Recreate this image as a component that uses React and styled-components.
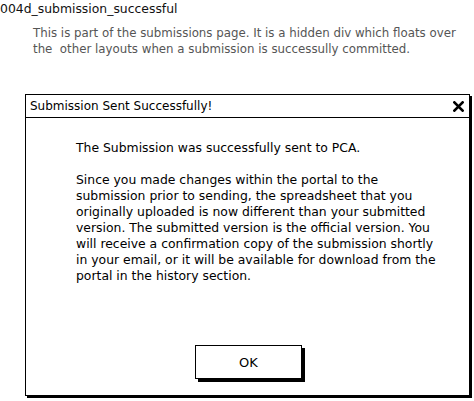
import React from "react";
import styled, { createGlobalStyle } from "styled-components";

const GlobalStyle = createGlobalStyle`
  body {
    margin: 0;
    background: #ffffff;
    font-family: "DejaVu Sans", "Liberation Sans", sans-serif;
  }
`;

const Page = styled.div`
  width: 474px;
  height: 401px;
  overflow: hidden;
  display: flex;
  flex-direction: column;
`;

const PageTitle = styled.div`
  font-size: 12.4px;
  line-height: 16px;
  color: #111;
  padding-top: 1px;
`;

const Note = styled.p`
  margin: 8px 0 0 33px;
  font-size: 11.8px;
  line-height: 16px;
  color: #555;
  white-space: pre;
`;

const Dialog = styled.div`
  margin: 37px 0 0 25px;
  width: 443px;
  height: 300px;
  border: 1.5px solid #000;
  box-shadow: 2px 2px 0 #000;
  display: flex;
  flex-direction: column;
  background: #fff;
`;

const TitleBar = styled.div`
  height: 22px;
  border-bottom: 1.5px solid #000;
  display: flex;
  align-items: center;
  justify-content: space-between;
  padding: 0 5px 0 4px;
  font-size: 12px;
  color: #000;
`;

const Close = styled.svg`
  width: 11px;
  height: 11px;
`;

const Body = styled.div`
  flex: 1;
  display: flex;
  flex-direction: column;
  align-items: center;
  padding-top: 22px;
`;

const Message = styled.div`
  width: 345px;
  margin-left: 2px;
  font-size: 12.4px;
  line-height: 16px;
  color: #000;
  white-space: pre;
`;

const Para = styled.p`
  margin: 0 0 ${(p) => p.gap || 0}px;
`;

const OkButton = styled.button`
  margin-top: auto;
  margin-bottom: 16px;
  width: 107px;
  height: 34px;
  border: 1.5px solid #000;
  box-shadow: 3px 3px 0 #000;
  background: #fff;
  font-family: inherit;
  font-size: 13px;
  color: #000;
  margin-left: 2px;
`;

export default function App() {
  return (
    <>
      <GlobalStyle />
      <Page>
        <PageTitle>004d_submission_successful</PageTitle>
        <Note>
          {"This is part of the submissions page. It is a hidden div which floats over\nthe  other layouts when a submission is successully committed."}
        </Note>
        <Dialog>
          <TitleBar>
            <span>Submission Sent Successfully!</span>
            <Close viewBox="0 0 12 12">
              <path d="M1.5 1.5 L10.5 10.5 M10.5 1.5 L1.5 10.5" stroke="#000" strokeWidth="3" strokeLinecap="round" />
            </Close>
          </TitleBar>
          <Body>
            <Message>
              <Para gap={16}>The Submission was successfully sent to PCA.</Para>
              <Para>
                {"Since you made changes within the portal to the\nsubmission prior to sending, the spreadsheet that you\noriginally uploaded is now different than your submitted\nversion. The submitted version is the official version. You\nwill receive a confirmation copy of the submission shortly\nin your email, or it will be available for download from the\nportal in the history section."}
              </Para>
            </Message>
            <OkButton>OK</OkButton>
          </Body>
        </Dialog>
      </Page>
    </>
  );
}
